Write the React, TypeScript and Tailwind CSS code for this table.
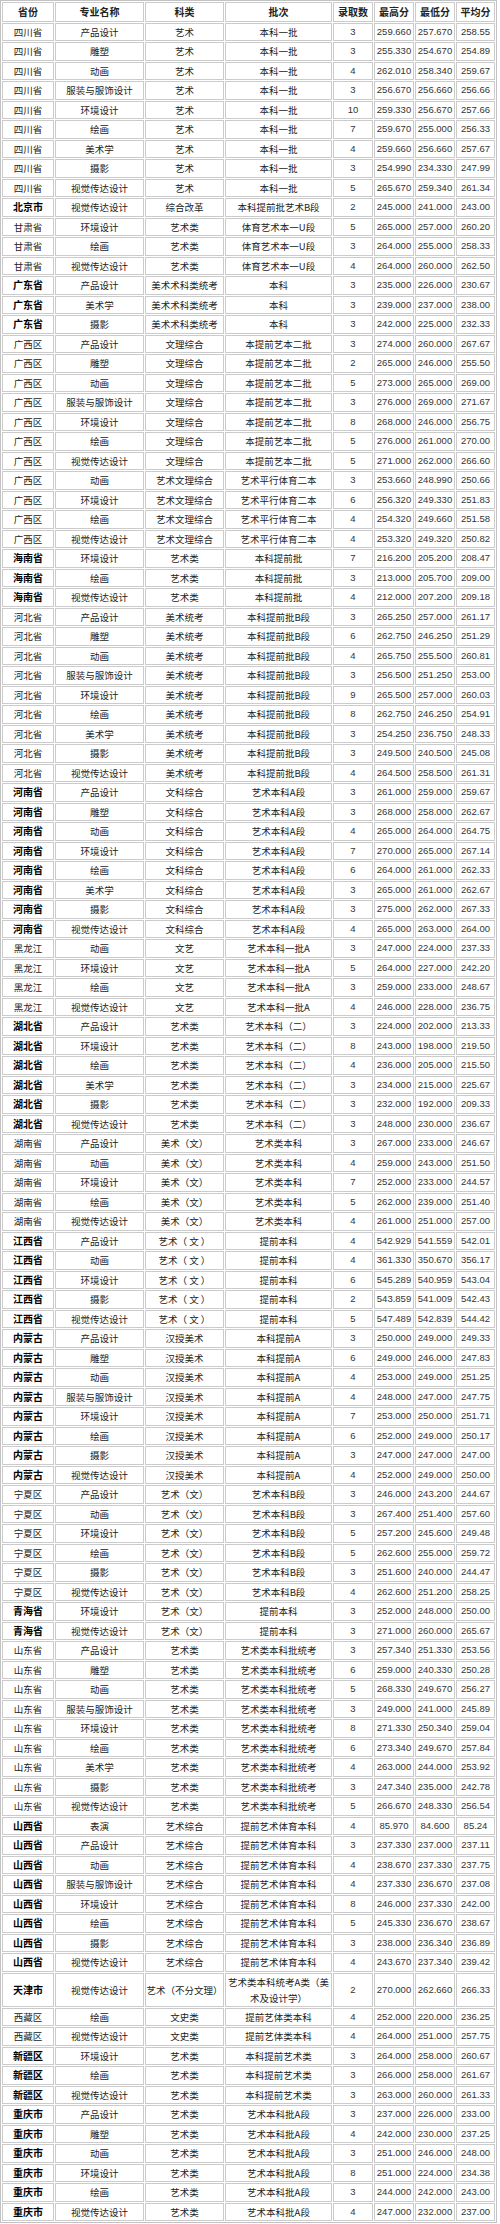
import React from 'react';

type Row = [string, number, string, string, string];
type Group = { prov: string; kind: string; batch: string; rows: Row[] };

const BOLD = new Set(['北京市', '广东省', '海南省', '河南省', '湖北省', '江西省', '内蒙古', '青海省', '山西省', '天津市', '新疆区', '重庆市']);

const groups: Group[] = [
  {
    prov: '四川省', kind: '艺术', batch: '本科一批', rows: [
      ['产品设计', 3, '259.660', '257.670', '258.55'],
      ['雕塑', 3, '255.330', '254.670', '254.89'],
      ['动画', 4, '262.010', '258.340', '259.67'],
      ['服装与服饰设计', 3, '256.670', '256.660', '256.66'],
      ['环境设计', 10, '259.330', '256.670', '257.66'],
      ['绘画', 7, '259.670', '255.000', '256.33'],
      ['美术学', 4, '259.660', '256.660', '257.67'],
      ['摄影', 3, '254.990', '234.330', '247.99'],
      ['视觉传达设计', 5, '265.670', '259.340', '261.34'],
    ],
  },
  {
    prov: '北京市', kind: '综合改革', batch: '本科提前批艺术B段', rows: [
      ['视觉传达设计', 2, '245.000', '241.000', '243.00'],
    ],
  },
  {
    prov: '甘肃省', kind: '艺术类', batch: '体育艺术本一U段', rows: [
      ['环境设计', 5, '265.000', '257.000', '260.20'],
      ['绘画', 3, '264.000', '255.000', '258.33'],
      ['视觉传达设计', 4, '264.000', '260.000', '262.50'],
    ],
  },
  {
    prov: '广东省', kind: '美术术科类统考', batch: '本科', rows: [
      ['产品设计', 3, '235.000', '226.000', '230.67'],
      ['美术学', 3, '239.000', '237.000', '238.00'],
      ['摄影', 3, '242.000', '225.000', '232.33'],
    ],
  },
  {
    prov: '广西区', kind: '文理综合', batch: '本提前艺本二批', rows: [
      ['产品设计', 3, '274.000', '260.000', '267.67'],
      ['雕塑', 2, '265.000', '246.000', '255.50'],
      ['动画', 5, '273.000', '265.000', '269.00'],
      ['服装与服饰设计', 3, '276.000', '269.000', '271.67'],
      ['环境设计', 8, '268.000', '246.000', '256.75'],
      ['绘画', 5, '276.000', '261.000', '270.00'],
      ['视觉传达设计', 5, '271.000', '262.000', '266.60'],
    ],
  },
  {
    prov: '广西区', kind: '艺术文理综合', batch: '艺术平行体育二本', rows: [
      ['动画', 3, '253.660', '248.990', '250.66'],
      ['环境设计', 6, '256.320', '249.330', '251.83'],
      ['绘画', 4, '254.320', '249.660', '251.58'],
      ['视觉传达设计', 4, '253.320', '249.320', '250.82'],
    ],
  },
  {
    prov: '海南省', kind: '艺术类', batch: '本科提前批', rows: [
      ['环境设计', 7, '216.200', '205.200', '208.47'],
      ['绘画', 3, '213.000', '205.700', '209.00'],
      ['视觉传达设计', 4, '212.000', '207.200', '209.18'],
    ],
  },
  {
    prov: '河北省', kind: '美术统考', batch: '本科提前批B段', rows: [
      ['产品设计', 3, '265.250', '257.000', '261.17'],
      ['雕塑', 6, '262.750', '246.250', '251.29'],
      ['动画', 4, '265.750', '255.500', '260.81'],
      ['服装与服饰设计', 3, '256.500', '251.250', '253.00'],
      ['环境设计', 9, '265.500', '257.000', '260.03'],
      ['绘画', 8, '262.750', '246.250', '254.91'],
      ['美术学', 3, '254.250', '236.750', '248.33'],
      ['摄影', 3, '249.500', '240.500', '245.08'],
      ['视觉传达设计', 4, '264.500', '258.500', '261.31'],
    ],
  },
  {
    prov: '河南省', kind: '文科综合', batch: '艺术本科A段', rows: [
      ['产品设计', 3, '261.000', '259.000', '259.67'],
      ['雕塑', 3, '268.000', '258.000', '262.67'],
      ['动画', 4, '265.000', '264.000', '264.75'],
      ['环境设计', 7, '270.000', '265.000', '267.14'],
      ['绘画', 6, '264.000', '261.000', '262.33'],
      ['美术学', 3, '265.000', '261.000', '262.67'],
      ['摄影', 3, '275.000', '262.000', '267.33'],
      ['视觉传达设计', 4, '265.000', '263.000', '264.00'],
    ],
  },
  {
    prov: '黑龙江', kind: '文艺', batch: '艺术本科一批A', rows: [
      ['动画', 3, '247.000', '224.000', '237.33'],
      ['环境设计', 5, '264.000', '227.000', '242.20'],
      ['绘画', 3, '259.000', '233.000', '248.67'],
      ['视觉传达设计', 4, '246.000', '228.000', '236.75'],
    ],
  },
  {
    prov: '湖北省', kind: '艺术类', batch: '艺术本科（二）', rows: [
      ['产品设计', 3, '224.000', '202.000', '213.33'],
      ['环境设计', 8, '243.000', '198.000', '219.50'],
      ['绘画', 4, '236.000', '205.000', '215.50'],
      ['美术学', 3, '234.000', '215.000', '225.67'],
      ['摄影', 3, '232.000', '192.000', '209.33'],
      ['视觉传达设计', 3, '248.000', '230.000', '236.67'],
    ],
  },
  {
    prov: '湖南省', kind: '美术（文）', batch: '艺术类本科', rows: [
      ['产品设计', 3, '267.000', '233.000', '246.67'],
      ['动画', 4, '259.000', '243.000', '251.50'],
      ['环境设计', 7, '252.000', '233.000', '244.57'],
      ['绘画', 5, '262.000', '239.000', '251.40'],
      ['视觉传达设计', 4, '261.000', '251.000', '257.00'],
    ],
  },
  {
    prov: '江西省', kind: '艺术（ 文 ）', batch: '提前本科', rows: [
      ['产品设计', 4, '542.929', '541.559', '542.01'],
      ['动画', 4, '361.330', '350.670', '356.17'],
      ['环境设计', 6, '545.289', '540.959', '543.04'],
      ['摄影', 2, '543.859', '541.009', '542.43'],
      ['视觉传达设计', 5, '547.489', '542.839', '544.42'],
    ],
  },
  {
    prov: '内蒙古', kind: '汉授美术', batch: '本科提前A', rows: [
      ['产品设计', 3, '250.000', '249.000', '249.33'],
      ['雕塑', 6, '249.000', '246.000', '247.83'],
      ['动画', 4, '253.000', '249.000', '251.25'],
      ['服装与服饰设计', 4, '248.000', '247.000', '247.75'],
      ['环境设计', 7, '253.000', '250.000', '251.71'],
      ['绘画', 6, '252.000', '249.000', '250.17'],
      ['摄影', 3, '247.000', '247.000', '247.00'],
      ['视觉传达设计', 4, '252.000', '249.000', '250.00'],
    ],
  },
  {
    prov: '宁夏区', kind: '艺术（文）', batch: '艺术本科B段', rows: [
      ['产品设计', 3, '246.000', '243.200', '244.67'],
      ['动画', 3, '267.400', '251.400', '257.60'],
      ['环境设计', 5, '257.200', '245.600', '249.48'],
      ['绘画', 5, '262.600', '255.000', '259.72'],
      ['摄影', 3, '251.600', '240.000', '244.47'],
      ['视觉传达设计', 4, '262.600', '251.200', '258.25'],
    ],
  },
  {
    prov: '青海省', kind: '艺术（文）', batch: '提前本科', rows: [
      ['环境设计', 3, '252.000', '248.000', '250.00'],
      ['视觉传达设计', 3, '271.000', '260.000', '265.67'],
    ],
  },
  {
    prov: '山东省', kind: '艺术类', batch: '艺术类本科批统考', rows: [
      ['产品设计', 3, '257.340', '251.330', '253.56'],
      ['雕塑', 6, '259.000', '240.330', '250.28'],
      ['动画', 5, '268.330', '249.670', '256.27'],
      ['服装与服饰设计', 3, '249.000', '241.000', '245.89'],
      ['环境设计', 8, '271.330', '250.340', '259.04'],
      ['绘画', 6, '273.340', '249.670', '257.84'],
      ['美术学', 4, '263.000', '244.000', '253.92'],
      ['摄影', 3, '247.340', '235.000', '242.78'],
      ['视觉传达设计', 5, '266.670', '248.330', '256.54'],
    ],
  },
  {
    prov: '山西省', kind: '艺术综合', batch: '提前艺术体育本科', rows: [
      ['表演', 4, '85.970', '84.600', '85.24'],
      ['产品设计', 3, '237.330', '237.000', '237.11'],
      ['动画', 4, '238.670', '237.330', '237.75'],
      ['服装与服饰设计', 4, '237.330', '236.670', '237.08'],
      ['环境设计', 8, '246.000', '237.330', '242.00'],
      ['绘画', 5, '245.330', '236.670', '238.67'],
      ['摄影', 3, '238.000', '236.340', '236.89'],
      ['视觉传达设计', 4, '243.670', '237.340', '239.42'],
    ],
  },
  {
    prov: '天津市', kind: '艺术（不分文理）', batch: 'TJ', rows: [
      ['视觉传达设计', 2, '270.000', '262.660', '266.33'],
    ],
  },
  {
    prov: '西藏区', kind: '文史类', batch: '提前艺体类本科', rows: [
      ['绘画', 4, '252.000', '220.000', '236.25'],
      ['视觉传达设计', 4, '264.000', '251.000', '257.75'],
    ],
  },
  {
    prov: '新疆区', kind: '艺术类', batch: '本科提前艺术类', rows: [
      ['环境设计', 3, '264.000', '258.000', '260.67'],
      ['绘画', 3, '266.000', '258.000', '261.67'],
      ['视觉传达设计', 3, '263.000', '260.000', '261.33'],
    ],
  },
  {
    prov: '重庆市', kind: '艺术类', batch: '艺术本科批A段', rows: [
      ['产品设计', 3, '237.000', '226.000', '233.00'],
      ['雕塑', 4, '242.000', '230.000', '237.25'],
      ['动画', 3, '251.000', '246.000', '248.00'],
      ['环境设计', 8, '251.000', '224.000', '234.38'],
      ['绘画', 3, '244.000', '242.000', '243.00'],
      ['视觉传达设计', 4, '247.000', '232.000', '237.00'],
    ],
  },
];

const cjk = { fontFamily: '"Noto Sans CJK SC", sans-serif' };
const num = { fontFamily: '"Liberation Sans", Arial, sans-serif' };

// each cell gets its own box, separated by 1px of white (old cellspacing look)
const td = 'border border-[#cbcbcb] p-0 text-center align-middle leading-[16px]';

export default function App() {
  const heads = ['省份', '专业名称', '科类', '批次', '录取数', '最高分', '最低分', '平均分'];

  return (
    <div className="w-[500px] bg-white">
      <table
        className="table-fixed w-[497px] border-separate border-spacing-[1px] border border-[#c2c2c2] text-[#222]"
        style={cjk}
      >
        <colgroup>
          <col className="w-[52px]" />
          <col className="w-[89px]" />
          <col className="w-[79px]" />
          <col className="w-[107px]" />
          <col className="w-[40px]" />
          <col className="w-[40px]" />
          <col className="w-[40px]" />
          <col className="w-[39px]" />
        </colgroup>
        <thead>
          <tr className="h-[19.5px]">
            {heads.map(h => (
              <th key={h} className={`${td} text-[10px] font-bold`}>{h}</th>
            ))}
          </tr>
        </thead>
        <tbody>
          {groups.map((g, gi) =>
            g.rows.map((r, ri) => {
              const tj = g.batch === 'TJ';
              return (
                <tr key={`${gi}-${ri}`} className={tj ? 'h-[33px]' : 'h-[18.5px]'}>
                  <td className={`${td} ${BOLD.has(g.prov) ? 'font-bold text-[10px] text-black' : 'text-[9.5px]'}`}>{g.prov}</td>
                  <td className={`${td} text-[9.5px]`}>{r[0]}</td>
                  <td className={`${td} text-[9.5px]`}>{g.kind}</td>
                  <td className={`${td} text-[9.5px]`}>
                    {tj ? (
                      <>艺术类本科统考A类（美<br />术及设计学）</>
                    ) : (
                      g.batch
                    )}
                  </td>
                  <td className={`${td} text-[9.5px] text-[#333]`} style={num}>{r[1]}</td>
                  <td className={`${td} text-[9.5px] text-[#333]`} style={num}>{r[2]}</td>
                  <td className={`${td} text-[9.5px] text-[#333]`} style={num}>{r[3]}</td>
                  <td className={`${td} text-[9.5px] text-[#333]`} style={num}>{r[4]}</td>
                </tr>
              );
            })
          )}
        </tbody>
      </table>
    </div>
  );
}
